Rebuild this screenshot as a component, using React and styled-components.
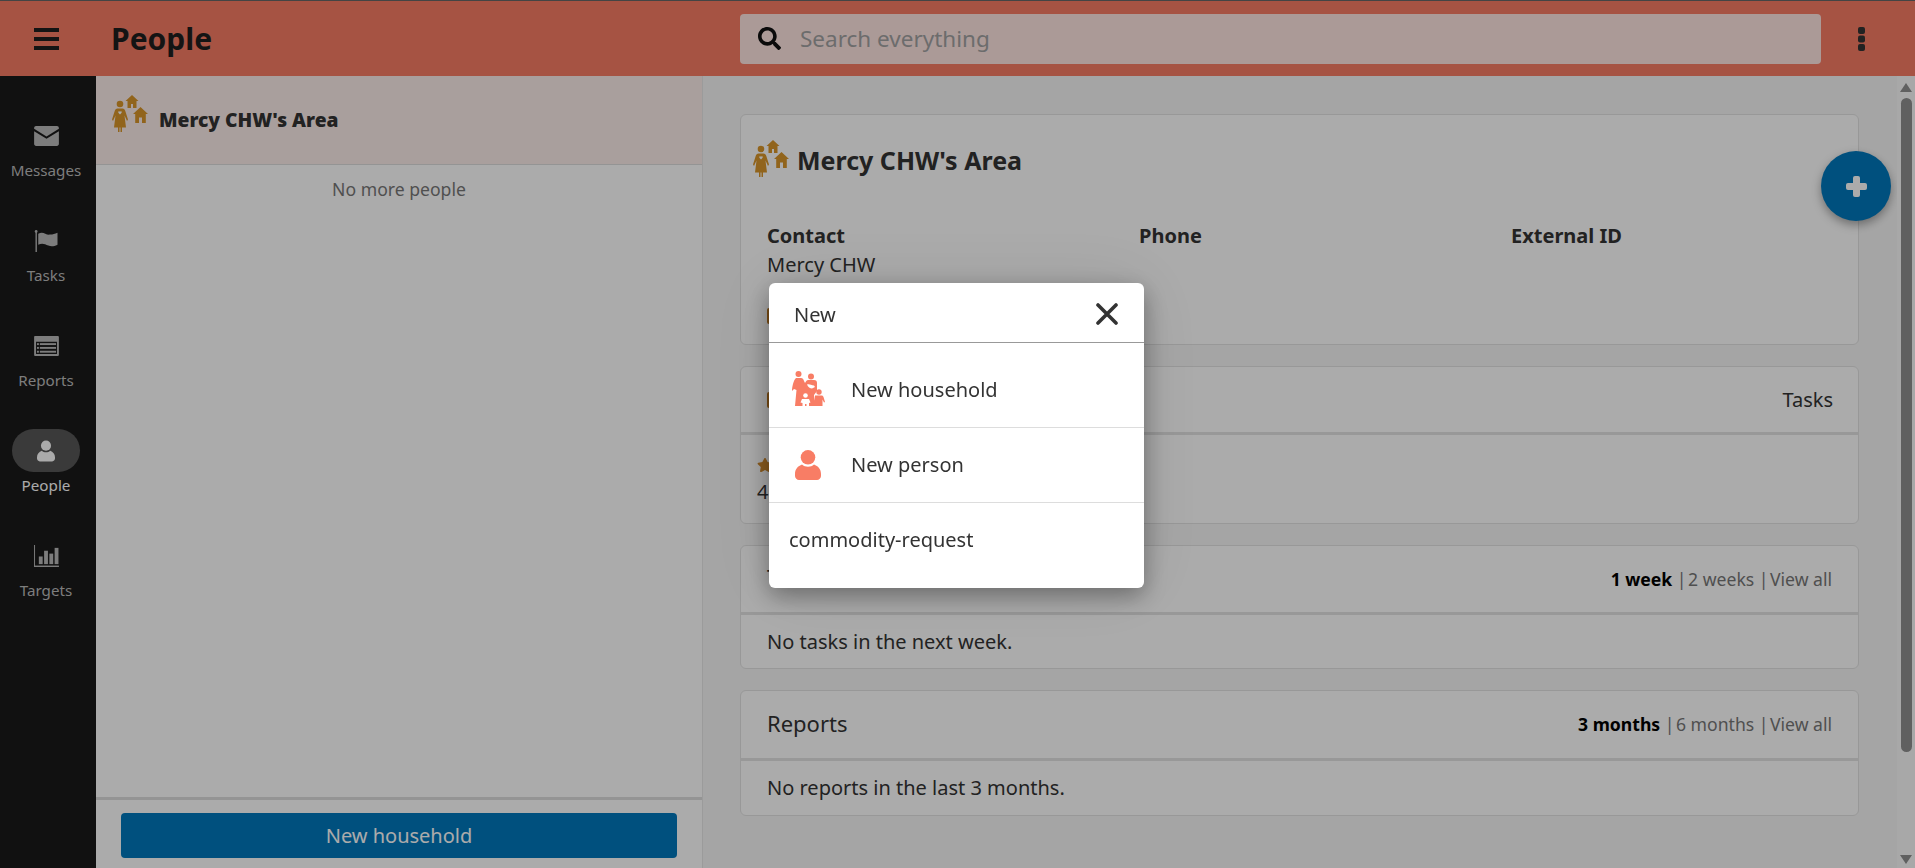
import React from "react";
import styled, { createGlobalStyle } from "styled-components";
import { FaSearch, FaStar } from "react-icons/fa";

const GlobalStyle = createGlobalStyle`
  html, body, #root {
    height: 100%;
    margin: 0;
  }
  body {
    overflow: hidden;
    font-family: "Noto Sans", "Open Sans", sans-serif;
    color: #333;
    background: #fff;
  }
  * { box-sizing: border-box; }
`;

const Page = styled.div`
  height: 868px;
  display: flex;
  flex-direction: column;
  border-top: 1px solid #666;
`;

const Header = styled.header`
  height: 75px;
  flex: none;
  display: flex;
  align-items: center;
  background: #f87d65;
  color: #222;
`;

const MenuButton = styled.div`
  width: 96px;
  padding-left: 34px;
  display: flex;
`;

const PageTitle = styled.h1`
  margin: 0;
  width: 628px;
  padding-left: 15px;
  font-size: 30px;
  font-weight: 700;
  color: #1f1f1f;
`;

const SearchBox = styled.div`
  width: 1081px;
  height: 50px;
  margin-left: 16px;
  padding-left: 18px;
  display: flex;
  align-items: center;
  gap: 19px;
  border-radius: 4px;
  background: #ffe6e2;
  color: #111;
  font-size: 23px;
  span {
    font-size: 22.5px;
    color: #a2a2a2;
  }
`;

const MoreButton = styled.div`
  margin-left: 37px;
  display: flex;
`;

const Body = styled.div`
  flex: 1;
  min-height: 0;
  display: flex;
`;

const Sidebar = styled.nav`
  width: 96px;
  flex: none;
  background: #1a1a1a;
  padding: 38px 4px 0 0;
  display: flex;
  flex-direction: column;
`;

const NavItem = styled.div`
  height: 105px;
  display: flex;
  flex-direction: column;
  align-items: center;
  font-size: 15.2px;
  color: ${(p) => (p.$active ? "#fff" : "#bbb")};
`;

const NavIcon = styled.div`
  width: 68px;
  height: 43px;
  flex: none;
  display: flex;
  align-items: center;
  justify-content: center;
  border-radius: 22px;
  background: ${(p) => (p.$active ? "#575757" : "transparent")};
  margin-bottom: 3px;
`;

const ListPane = styled.aside`
  width: 607px;
  flex: none;
  display: flex;
  flex-direction: column;
  border-right: 1px solid #e8e8e8;
  background: #fff;
`;

const AreaRow = styled.div`
  height: 89px;
  flex: none;
  display: flex;
  padding: 19px 16px;
  gap: 11px;
  background: #fdeeeb;
  border-bottom: 1px solid #ddd;
  font-size: 19.2px;
  font-weight: 700;
  color: #333;
  strong {
    padding-top: 12px;
    line-height: 25px;
  }
`;

const NoMore = styled.div`
  flex: 1;
  padding-top: 12px;
  text-align: center;
  font-size: 17.6px;
  color: #777;
`;

const Footer = styled.div`
  height: 71px;
  flex: none;
  padding: 13px 25px 0;
  border-top: 3px solid #ddd;
`;

const WideButton = styled.div`
  height: 45px;
  display: flex;
  align-items: center;
  justify-content: center;
  border-radius: 4px;
  background: #0078bd;
  color: #fff;
  font-size: 20px;
`;

const Content = styled.main`
  position: relative;
  flex: 1;
  min-width: 0;
  padding: 38px 56px 0 37px;
  background: #f7f7f7;
  display: flex;
  flex-direction: column;
  gap: 21px;
`;

const Card = styled.section`
  border: 1px solid #e3e3e3;
  border-radius: 6px;
  background: #fff;
  font-size: 20px;
`;

const SummaryCard = styled(Card)`
  height: 231px;
  padding: 24px 12px;
`;

const SummaryTitle = styled.h2`
  margin: 0;
  display: flex;
  align-items: center;
  gap: 8px;
  font-size: 25px;
  font-weight: 700;
  color: #333;
  span {
    padding-top: 4px;
  }
`;

const FieldGrid = styled.div`
  margin-top: 44px;
  padding-left: 14px;
  display: grid;
  grid-template-columns: repeat(3, 372px);
  line-height: 29px;
  b {
    display: block;
  }
`;

const FieldRow = styled.div`
  margin-top: 29px;
  padding-left: 14px;
  display: flex;
`;

const CardHead = styled.div`
  height: ${(p) => p.$h || 69}px;
  padding: 0 25px 0 26px;
  display: flex;
  align-items: center;
  justify-content: space-between;
  border-bottom: 3px solid #e3e3e3;
  font-size: 22px;
`;

const HeadTitle = styled.span`
  padding-bottom: 4px;
`;

const HeadAside = styled.span`
  font-size: 20px;
`;

const CardBody = styled.div`
  padding: ${(p) => p.$top || 14}px 26px 0;
  min-height: ${(p) => p.$h || 53}px;
  line-height: 26px;
`;

const StatBody = styled(CardBody)`
  padding-left: 16px;
`;

const RangeLinks = styled.div`
  margin-right: 1px;
  padding-bottom: 1px;
  font-size: 17.6px;
  color: #777;
  b { color: #000; }
  i {
    display: inline-block;
    width: 1.5px;
  }
`;

const Fab = styled.div`
  position: absolute;
  top: 75px;
  right: 24px;
  width: 70px;
  height: 70px;
  display: flex;
  align-items: center;
  justify-content: center;
  border-radius: 50%;
  background: #0078bd;
  box-shadow: 0 4px 10px rgba(0, 0, 0, 0.35);
`;

const ScrollTrack = styled.div`
  position: absolute;
  top: 0;
  bottom: 0;
  right: 0;
  width: 18px;
  background: #fbfbfb;
`;

const ScrollThumb = styled.div`
  position: absolute;
  top: 22px;
  left: 4px;
  width: 11px;
  height: 654px;
  border-radius: 6px;
  background: #8f8f8f;
`;

const ScrollArrow = styled.div`
  position: absolute;
  left: 3px;
  ${(p) => (p.$down ? "bottom: 4px;" : "top: 7px;")}
  border-left: 6.5px solid transparent;
  border-right: 6.5px solid transparent;
  ${(p) => (p.$down ? "border-top: 9px solid #8f8f8f;" : "border-bottom: 9px solid #8f8f8f;")}
`;

const Backdrop = styled.div`
  position: fixed;
  inset: 0;
  background: rgba(0, 0, 0, 0.33);
`;

const Modal = styled.div`
  position: fixed;
  top: 283px;
  left: 769px;
  width: 375px;
  height: 305px;
  border-radius: 6px;
  background: #fff;
  box-shadow: 0 8px 24px rgba(0, 0, 0, 0.35), 0 0 70px rgba(0, 0, 0, 0.1);
  color: #333;
`;

const ModalHead = styled.div`
  height: 60px;
  padding: 3px 26px 0 25px;
  display: flex;
  align-items: center;
  justify-content: space-between;
  border-bottom: 1px solid #999;
  font-size: 20px;
`;

const ModalRow = styled.div`
  height: ${(p) => p.$h}px;
  padding: ${(p) => p.$top || 0}px 0 ${(p) => p.$bottom || 0}px 20px;
  display: flex;
  align-items: center;
  font-size: 20px;
  border-bottom: ${(p) => (p.$last ? "none" : "1px solid #ddd")};
`;

const RowIcon = styled.div`
  width: 38px;
  margin-right: 24px;
  display: flex;
  justify-content: center;
`;

function PersonIcon({ width = 18, height = 22, color = "#fff" }) {
  return (
    <svg width={width} height={height} viewBox="0 0 26 30" fill={color}>
      <circle cx="13" cy="7.300" r="7.300" />
      <path d="M0 24c0-5 3-8 7-9.500 3 3 9 3 12 0 4 1.500 7 4.500 7 9.500v2c0 2-2 4-4 4H4c-2 0-4-2-4-4z" />
    </svg>
  );
}

function FamilyIcon() {
  return (
    <svg width="33" height="36" viewBox="0 0 33 36" fill="#f87d65">
      <circle cx="6.500" cy="3" r="3" />
      <circle cx="19" cy="5.500" r="3" />
      <circle cx="27" cy="21" r="2.700" />
      <path d="M4 7h5c1.500 0 2.500 1 3 3l1 2c1-2 2-3 3-3h6c2 0 3 1 3 3v8l-3 4v11H3l1.500-16-2.500-1 -2 2c0-4 1.500-11 4-13z" />
      <path d="M23 24.500h6.500c1 0 1.800.6 2 1.500l1.500 5-1 .5-1.500-3V35H21z" />
      <circle cx="13.500" cy="24.500" r="2.300" fill="#fff" />
      <path d="M10 28h7l1.500 3.500-1.500.5V35.500h-2.500V33h-1.500v2.500H10.500V32l-2-.5z" fill="#fff" />
      <path d="M15 13.500c2-1 4 .5 7 1l1 1.500-3 1.500c-2 0-4-1.500-5-4z" fill="#fff" />
    </svg>
  );
}

function AreaIcon() {
  return (
    <svg width="36" height="37" viewBox="0 0 36 37" fill="#d9962b">
      <circle cx="8" cy="9" r="3.300" />
      <path d="M5.500 13.500h5c1.500 0 2.300 1 2.800 2.500l2.700 8.500-1 1.500-2.500-5.500 1.500 12H10v5H8.500v-5h-1v5H6v-5H2l1.500-12L1 26l-1-1.500 2.700-8.500c.5-1.500 1.300-2.500 2.800-2.500z" />
      <path d="M6.500 16.500c.8-.6 1.500 0 1.500.4 0-.4.700-1 1.500-.4.7.7 0 1.700-1.500 3-1.500-1.300-2.200-2.300-1.500-3z" fill="#fff" />
      <path d="M20 0l6.500 6H24.500v7H21v-4h-2v4h-3.500V6h-2z" />
      <path d="M28.500 12l7.500 7h-2.200v9H30v-5.500h-3V28h-3.800v-9H21z" />
    </svg>
  );
}

function BrownMark() {
  return (
    <svg width="20" height="16" viewBox="0 0 20 16" fill="#b8741e">
      <rect width="20" height="16" rx="2" />
    </svg>
  );
}

function BarsIcon() {
  return (
    <svg width="25" height="22" viewBox="0 0 25 22" fill="#1f1f1f">
      <rect width="25" height="4" />
      <rect y="9" width="25" height="4" />
      <rect y="18" width="25" height="4" />
    </svg>
  );
}

function DotsIcon() {
  return (
    <svg width="7" height="24" viewBox="0 0 7 24" fill="#333">
      <rect width="7" height="7" rx="2" />
      <rect y="8.500" width="7" height="7" rx="2" />
      <rect y="17" width="7" height="7" rx="2" />
    </svg>
  );
}

function PlusIcon() {
  return (
    <svg width="21" height="21" viewBox="0 0 21 21" fill="#fff">
      <rect x="7" width="7" height="21" rx="2" />
      <rect y="7" width="21" height="7" rx="2" />
    </svg>
  );
}

function CloseIcon() {
  return (
    <svg width="22" height="22" viewBox="0 0 22 22" stroke="#333" strokeWidth="3.600" strokeLinecap="round">
      <path d="M2 2l18 18M20 2L2 20" />
    </svg>
  );
}

function EnvelopeIcon() {
  return (
    <svg width="25" height="20" viewBox="0 0 26 21" fill="#bbb">
      <path d="M2 0h22c1 0 2 1 2 2v1L13 11 0 3V2c0-1 1-2 2-2z" />
      <path d="M0 5.500l13 8 13-8V19c0 1-1 2-2 2H2c-1 0-2-1-2-2z" />
    </svg>
  );
}

function FlagIcon() {
  return (
    <svg width="25" height="22" viewBox="0 0 26 24" fill="#bbb">
      <rect x="1" y="1" width="1.500" height="23" />
      <circle cx="1.700" cy="1.500" r="1.500" />
      <path d="M4 4c6-3 8 2 13 1 3 0 5-1 8-2v13c-4 2-7 2-10 1-4-2-7-3-11-1z" />
    </svg>
  );
}

function ReportIcon() {
  return (
    <svg width="25" height="20" viewBox="0 0 26 21" fill="#bbb">
      <path d="M1 0h24c1 0 1 1 1 1v19c0 1-1 1-1 1H1c-1 0-1-1-1-1V1c0-1 1-1 1-1zM2 6v13h22V6z" fillRule="evenodd" />
      <rect x="3" y="7.500" width="2" height="2" />
      <rect x="6" y="7.500" width="17" height="2" />
      <rect x="3" y="11.500" width="2" height="2" />
      <rect x="6" y="11.500" width="17" height="2" />
      <rect x="3" y="15.500" width="2" height="2" />
      <rect x="6" y="15.500" width="17" height="2" />
    </svg>
  );
}

function ChartIcon() {
  return (
    <svg width="25" height="22" viewBox="0 0 26 23" fill="#bbb">
      <rect x="0" y="0" width="1" height="23" />
      <rect x="0" y="21.500" width="26" height="1.500" />
      <rect x="5" y="12" width="4" height="8" />
      <rect x="10.500" y="6" width="4" height="14" />
      <rect x="16" y="9" width="4" height="11" />
      <rect x="21.500" y="3" width="4" height="17" />
    </svg>
  );
}

const navItems = [
  { label: "Messages", icon: <EnvelopeIcon /> },
  { label: "Tasks", icon: <FlagIcon /> },
  { label: "Reports", icon: <ReportIcon /> },
  { label: "People", icon: <PersonIcon />, active: true },
  { label: "Targets", icon: <ChartIcon /> },
];

export default function App() {
  return (
    <>
      <GlobalStyle />
      <Page>
        <Header>
          <MenuButton><BarsIcon /></MenuButton>
          <PageTitle>People</PageTitle>
          <SearchBox>
            <FaSearch />
            <span>Search everything</span>
          </SearchBox>
          <MoreButton><DotsIcon /></MoreButton>
        </Header>
        <Body>
          <Sidebar>
            {navItems.map((item) => (
              <NavItem key={item.label} $active={item.active}>
                <NavIcon $active={item.active}>{item.icon}</NavIcon>
                {item.label}
              </NavItem>
            ))}
          </Sidebar>
          <ListPane>
            <AreaRow>
              <AreaIcon />
              <strong>Mercy CHW's Area</strong>
            </AreaRow>
            <NoMore>No more people</NoMore>
            <Footer><WideButton>New household</WideButton></Footer>
          </ListPane>
          <Content>
            <SummaryCard>
              <SummaryTitle><AreaIcon /><span>Mercy CHW's Area</span></SummaryTitle>
              <FieldGrid>
                <div><b>Contact</b>Mercy CHW</div>
                <div><b>Phone</b></div>
                <div><b>External ID</b></div>
              </FieldGrid>
              <FieldRow><BrownMark /></FieldRow>
            </SummaryCard>
            <Card>
              <CardHead $h={68}><BrownMark /><HeadAside>Tasks</HeadAside></CardHead>
              <StatBody $top={18} $h={88}><FaStar color="#d08a2e" size={16} /><br />4</StatBody>
            </Card>
            <Card>
              <CardHead>
                <HeadTitle>Tasks</HeadTitle>
                <RangeLinks><b>1 week</b> |<i />2 weeks |<i />View all</RangeLinks>
              </CardHead>
              <CardBody>No tasks in the next week.</CardBody>
            </Card>
            <Card>
              <CardHead $h={70}>
                <HeadTitle>Reports</HeadTitle>
                <RangeLinks><b>3 months</b> |<i />6 months |<i />View all</RangeLinks>
              </CardHead>
              <CardBody $h={54}>No reports in the last 3 months.</CardBody>
            </Card>
            <Fab><PlusIcon /></Fab>
            <ScrollTrack>
              <ScrollArrow />
              <ScrollThumb />
              <ScrollArrow $down />
            </ScrollTrack>
          </Content>
        </Body>
      </Page>
      <Backdrop />
      <Modal>
        <ModalHead>
          <span>New</span>
          <CloseIcon />
        </ModalHead>
        <ModalRow $h={85} $top={8}>
          <RowIcon><FamilyIcon /></RowIcon>
          New household
        </ModalRow>
        <ModalRow $h={75} $bottom={1}>
          <RowIcon><PersonIcon color="#f87d65" width={26} height={30} /></RowIcon>
          New person
        </ModalRow>
        <ModalRow $h={75} $bottom={2} $last>commodity-request</ModalRow>
      </Modal>
    </>
  );
}
